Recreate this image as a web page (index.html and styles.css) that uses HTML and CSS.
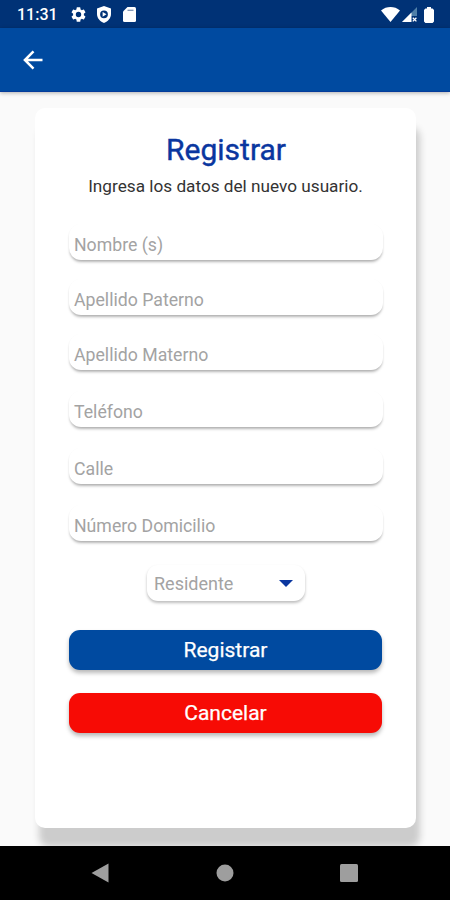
FILE: index.html
```html
<!DOCTYPE html>
<html lang="es">
<head>
<meta charset="utf-8">
<title>Registrar</title>
<link rel="stylesheet" href="styles.css">
</head>
<body>
<div class="status">
  <span class="clock">11:31</span>
  <svg class="gear" width="15" height="15" viewBox="2 2 20 20"><path fill="#fff" d="M19.14 12.94c.04-.3.06-.61.06-.94s-.02-.64-.07-.94l2.03-1.58a.5.5 0 0 0 .12-.61l-1.92-3.32a.5.5 0 0 0-.59-.22l-2.39.96c-.5-.38-1.03-.7-1.62-.94l-.36-2.54a.5.5 0 0 0-.48-.41h-3.84a.5.5 0 0 0-.47.41l-.36 2.54c-.59.24-1.13.57-1.62.94l-2.39-.96a.5.5 0 0 0-.59.22L2.74 8.87a.5.5 0 0 0 .12.61l2.03 1.58c-.05.3-.09.63-.09.94s.02.64.07.94l-2.03 1.58a.5.5 0 0 0-.12.61l1.92 3.32c.12.22.37.29.59.22l2.39-.96c.5.38 1.03.7 1.62.94l.36 2.54c.05.24.24.41.48.41h3.84c.24 0 .44-.17.47-.41l.36-2.54c.59-.24 1.13-.56 1.62-.94l2.39.96c.22.08.47 0 .59-.22l1.92-3.32a.5.5 0 0 0-.12-.61zM12 15.6a3.6 3.6 0 1 1 0-7.2 3.6 3.6 0 0 1 0 7.2z"/></svg>
  <svg class="shield" width="14" height="17" viewBox="0 0 14 17"><path fill="#fff" fill-rule="evenodd" d="M7 0L14 2.600V8c0 4-2.800 7.200-7 9-4.200-1.800-7-5-7-9V2.600zM7 4.400a3.900 3.900 0 1 0 0 7.800A3.900 3.900 0 0 0 7 4.400z"/><path fill="#fff" d="M5.600 5.900l3.900 2.400-3.900 2.400z"/></svg>
  <svg class="sd" width="13" height="15" viewBox="0 0 13 15"><path fill="#fff" d="M4.500 0h7A1.500 1.500 0 0 1 13 1.500v12a1.500 1.500 0 0 1-1.500 1.500h-10A1.500 1.500 0 0 1 0 13.500v-9z"/><path stroke="#8095b5" stroke-width="1.300" d="M4.500 3.300h6"/></svg>
  <svg class="wifi" width="19" height="15" viewBox="0 0 19 15"><path fill="#fff" d="M0 3.400C5.500-1.100 13.500-1.100 19 3.400L9.500 15z"/></svg>
  <svg class="signal" width="15" height="15" viewBox="0 0 15 15"><path fill="#4f7fa8" d="M15 0v9H9v6H0z"/><path fill="#fff" d="M9.500 5.500V15H0z"/><path stroke="#fff" stroke-width="1.300" d="M10.800 10.800l3.600 3.600m0-3.600l-3.600 3.600"/></svg>
  <svg class="battery" width="10" height="16" viewBox="0 0 10 16"><path fill="#fff" d="M3 0h4v1.600h1.600L10 3v11.600L8.600 16H1.400L0 14.600V3l1.400-1.400H3z"/></svg>
</div>
<header class="appbar">
  <svg width="20" height="20" viewBox="0 0 20 20" fill="none" stroke="#fff" stroke-width="2.500"><path d="M19.500 10H2M10.500 1.400L1.900 10l8.600 8.600"/></svg>
</header>
<main class="page">
  <section class="card">
    <h1>Registrar</h1>
    <p class="intro">Ingresa los datos del nuevo usuario.</p>
    <div class="fields">
      <div class="field">Nombre (s)</div>
      <div class="field">Apellido Paterno</div>
      <div class="field">Apellido Materno</div>
      <div class="field spaced">Teléfono</div>
      <div class="field spaced">Calle</div>
      <div class="field spaced">Número Domicilio</div>
    </div>
    <div class="select"><span>Residente</span><svg width="14" height="7" viewBox="0 0 14 7"><path fill="#0a369f" d="M0 0h14L7 7z"/></svg></div>
    <div class="button primary">Registrar</div>
    <div class="button danger">Cancelar</div>
  </section>
</main>
<nav class="navbar">
  <svg width="18" height="20" viewBox="0 0 18 20"><path fill="#9e9e9e" d="M17.500.5v19L.5 10z"/></svg>
  <svg width="18" height="18" viewBox="0 0 18 18"><circle cx="9" cy="9" r="8.500" fill="#9e9e9e"/></svg>
  <svg width="18" height="18" viewBox="0 0 18 18"><rect width="18" height="18" rx="1.500" fill="#9e9e9e"/></svg>
</nav>
</body>
</html>
```
FILE: styles.css
```css
* { box-sizing: border-box; }
body {
  margin: 0;
  width: 450px;
  height: 900px;
  display: flex;
  flex-direction: column;
  overflow: hidden;
  background: #fafafa;
  font-family: Roboto, "Liberation Sans", sans-serif;
}
svg { display: block; flex: none; }
.status {
  flex: none;
  height: 28px;
  display: flex;
  align-items: center;
  padding: 1px 16px 0 17px;
  background: #003276;
}
.clock {
  width: 54px;
  color: #fff;
  font-size: 16px;
  font-weight: 500;
  line-height: 20px;
  padding-top: 1px;
}
.shield { margin-left: 11px; }
.sd { margin-left: 12px; }
.wifi { margin-left: auto; }
.signal { margin-left: 2px; }
.battery { margin-left: 7px; }
.appbar {
  flex: none;
  height: 64px;
  display: flex;
  align-items: center;
  padding-left: 23px;
  background: #004aa0;
  border-bottom: 1px solid #053c9b;
  box-shadow: 0 1px 4px rgba(0, 0, 0, .3);
  position: relative;
}
.page {
  flex: none;
  height: 754px;
  padding: 16px 34px 0 35px;
  overflow: hidden;
}
.card {
  height: 720px;
  padding: 24px 33px 0 34px;
  border-radius: 10px;
  background: #fff;
  box-shadow: 4px 19px 7px #ccc;
}
h1 {
  margin: 0;
  color: #0a369f;
  font-size: 30px;
  font-weight: 400;
  line-height: 36px;
  text-align: center;
  -webkit-text-stroke: .4px #0a369f;
}
.intro {
  margin: 7px -4px 0 -5px;
  color: #333;
  font-size: 17.200px;
  line-height: 22px;
  text-align: center;
}
.fields {
  display: flex;
  flex-direction: column;
  gap: 19px;
  margin-top: 27px;
}
.spaced { margin-top: 2px; }
.field {
  height: 36px;
  padding: 4px 5px 0;
  border-radius: 12px;
  background: #fff;
  box-shadow: 0 3px 3px -1px rgba(0, 0, 0, .28), 0 1px 2px rgba(0, 0, 0, .06);
  color: #a3a3a3;
  font-size: 17.700px;
  line-height: 34px;
}
.select {
  width: 158px;
  height: 36px;
  margin: 24px auto 0;
  display: flex;
  align-items: center;
  justify-content: space-between;
  padding: 0 12px 0 7px;
  border-radius: 11px;
  background: #fff;
  box-shadow: 0 2px 3px rgba(0, 0, 0, .26);
  color: #a3a3a3;
  font-size: 18px;
}
.button {
  height: 40px;
  margin: 29px 1px 0 0;
  border-radius: 11px;
  color: #fff;
  font-size: 21px;
  font-weight: 400;
  line-height: 41px;
  text-align: center;
  box-shadow: 0 3px 4px rgba(0, 0, 0, .28);
  -webkit-text-stroke: .25px #fff;
}
.primary { background: #004aa0; }
.danger { margin-top: 23px; background: #f70b05; }
.navbar {
  flex: none;
  height: 54px;
  display: flex;
  align-items: center;
  justify-content: space-between;
  padding: 0 92px 0 91px;
  background: #000;
}
```
